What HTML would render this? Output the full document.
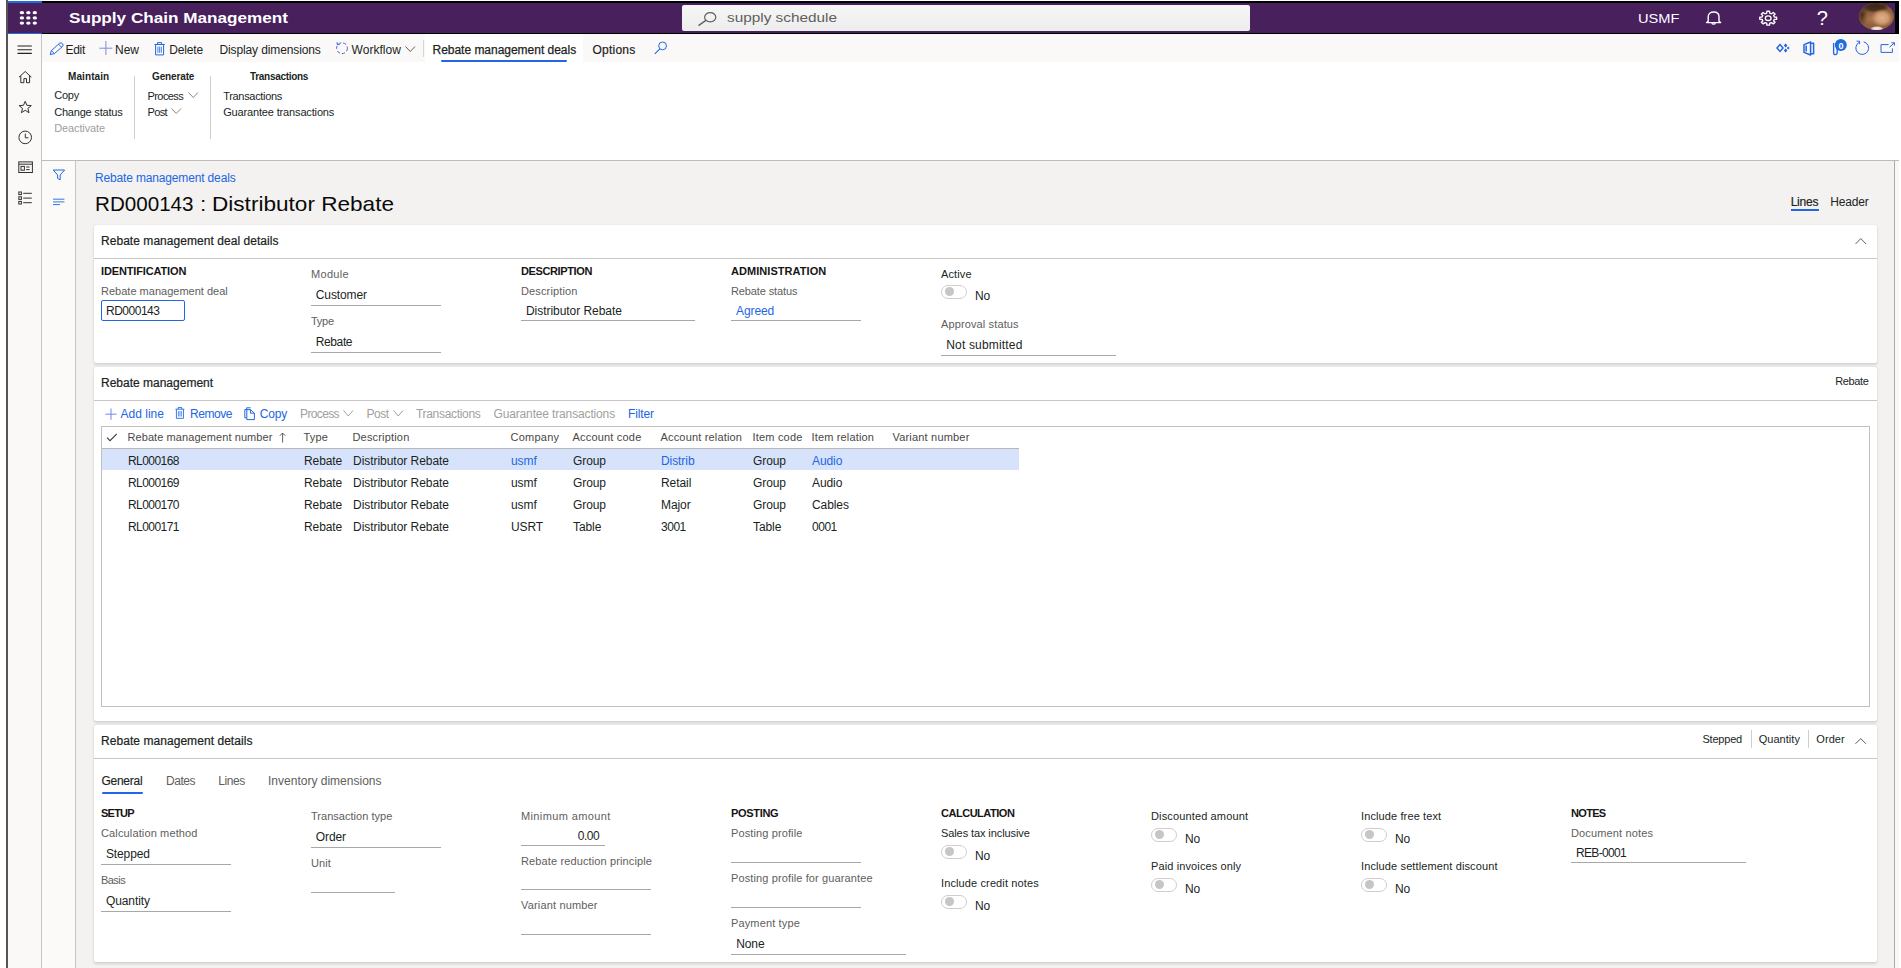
<!DOCTYPE html>
<html lang="en"><head><meta charset="utf-8"><title>Rebate management deals</title>
<style>
html,body{margin:0;padding:0;}
body{width:1901px;height:968px;overflow:hidden;background:#fff;position:relative;font-family:"Liberation Sans", sans-serif;}
#root{position:absolute;left:0;top:0;width:1901px;height:968px;overflow:hidden;}
#root div,#root span,#root svg{position:absolute;box-sizing:border-box;}
#root span{white-space:pre;}
svg{overflow:visible}
</style></head><body><div id="root">
<div style="left:6px;top:0px;width:2px;height:968px;background:#555555;"></div>
<div style="left:8px;top:1px;width:1891px;height:33px;background:#000;"></div>
<div style="left:8px;top:1px;width:34px;height:33px;background:#1f6ce0;"></div>
<div style="left:8px;top:3px;width:1887px;height:30px;background:#47205c;"></div>
<div style="left:8px;top:34px;width:33px;height:934px;background:#faf9f8;"></div>
<div style="left:41px;top:34px;width:1px;height:934px;background:#c8c6c4;"></div>
<div style="left:42px;top:34px;width:1857px;height:28px;background:#faf9f8;"></div>
<div style="left:42px;top:62px;width:1857px;height:98px;background:#fff;"></div>
<div style="left:42px;top:160px;width:1857px;height:1px;background:#bebbb8;"></div>
<div style="left:42px;top:161px;width:33px;height:807px;background:#fbfaf9;"></div>
<div style="left:75px;top:161px;width:1px;height:807px;background:#c8c6c4;"></div>
<div style="left:76px;top:161px;width:1818px;height:807px;background:#f3f2f1;"></div>
<div style="left:1894px;top:161px;width:1px;height:807px;background:#adabaa;"></div>
<div style="left:1895px;top:161px;width:4px;height:807px;background:#f8f7f6;"></div>
<svg style="left:0;top:0" width="60" height="34"><ellipse cx="21.90" cy="12.70" rx="2.2" ry="1.6" fill="#fff"/><ellipse cx="28.35" cy="12.70" rx="2.2" ry="1.6" fill="#fff"/><ellipse cx="34.80" cy="12.70" rx="2.2" ry="1.6" fill="#fff"/><ellipse cx="21.90" cy="17.90" rx="2.2" ry="1.6" fill="#fff"/><ellipse cx="28.35" cy="17.90" rx="2.2" ry="1.6" fill="#fff"/><ellipse cx="34.80" cy="17.90" rx="2.2" ry="1.6" fill="#fff"/><ellipse cx="21.90" cy="23.10" rx="2.2" ry="1.6" fill="#fff"/><ellipse cx="28.35" cy="23.10" rx="2.2" ry="1.6" fill="#fff"/><ellipse cx="34.80" cy="23.10" rx="2.2" ry="1.6" fill="#fff"/></svg>
<div style="left:682px;top:5px;width:568px;height:25.5px;background:linear-gradient(#f6f6f6,#ededed);border-radius:2px;"></div>
<svg style="left:697px;top:11px" width="22" height="16" viewBox="0 0 22 16"><ellipse cx="13.2" cy="6.2" rx="5.6" ry="4.6" fill="none" stroke="#605e5c" stroke-width="1.2"/><path d="M8.8 9.4 L1.5 14.6" stroke="#605e5c" stroke-width="1.3" fill="none"/></svg>
<svg style="left:1704px;top:10px" width="20" height="16" viewBox="0 0 20 16"><path d="M4.2 11.2 V6.8 C4.2 3.6 6.6 2 9.6 2 C12.6 2 15 3.6 15 6.8 V11.2 L16.6 12.6 H2.6 Z" fill="none" stroke="#fff" stroke-width="1.4" stroke-linejoin="round"/><path d="M7.8 13.2 C8.2 14.4 11 14.4 11.4 13.2" fill="none" stroke="#fff" stroke-width="1.3"/></svg>
<svg style="left:1758px;top:9.5px" width="20" height="16" viewBox="0 0 20 16"><path d="M16.37 6.99 L18.63 7.10 L18.63 9.30 L16.37 9.41 L15.61 10.92 L17.11 12.31 L15.22 13.86 L13.51 12.63 L11.68 13.26 L11.54 15.11 L8.86 15.11 L8.72 13.26 L6.89 12.63 L5.18 13.86 L3.29 12.31 L4.79 10.92 L4.03 9.41 L1.77 9.30 L1.77 7.10 L4.03 6.99 L4.79 5.48 L3.29 4.09 L5.18 2.54 L6.89 3.77 L8.72 3.14 L8.86 1.29 L11.54 1.29 L11.68 3.14 L13.51 3.77 L15.22 2.54 L17.11 4.09 L15.61 5.48 Z" fill="none" stroke="#fff" stroke-width="1.35" stroke-linejoin="round"/><ellipse cx="10.2" cy="8.2" rx="2.9" ry="2.3" fill="none" stroke="#fff" stroke-width="1.3"/></svg>
<div style="left:1859px;top:3px;width:34.8px;height:27px;border-radius:50%;overflow:hidden;background:#7a5234"><div style="left:0;top:0;width:36px;height:27px;background:radial-gradient(ellipse 11px 9px at 23px 15px,#e0b08a 0%,#d19a72 55%,rgba(170,115,75,0) 100%),radial-gradient(ellipse 9px 7px at 12px 16px,#a9744d 0%,rgba(150,100,60,0) 100%),radial-gradient(ellipse 16px 7px at 16px 3px,#3b2616 0%,#4a301c 60%,rgba(80,50,30,0) 100%),radial-gradient(ellipse 6px 11px at 3px 12px,#4a2f1b 0%,rgba(80,50,30,0) 100%),radial-gradient(ellipse 7px 3px at 18px 26px,#f0e8de 0%,#e8dccd 60%,rgba(230,220,200,0) 100%),radial-gradient(ellipse 4px 2px at 17px 13px,#6b4228 0%,rgba(100,60,40,0) 100%),radial-gradient(ellipse 4px 2px at 27px 13px,#7a4c2e 0%,rgba(100,60,40,0) 100%),#8c5f3d"></div></div>
<svg style="left:17px;top:45px" width="16" height="10"><path d="M0.5 1 H14.8 M0.5 4.7 H14.8 M0.5 8.4 H14.8" stroke="#252423" stroke-width="1.15"/></svg>
<svg style="left:18px;top:70px" width="15" height="14" viewBox="0 0 15 14"><path d="M1 7.2 L7.2 1.5 L13.4 7.2 M2.8 5.9 V12.7 H5.9 V8.6 H8.5 V12.7 H11.6 V5.9" stroke="#323130" fill="none" stroke-width="1" stroke-linejoin="round"/></svg>
<svg style="left:18px;top:100px" width="15" height="14" viewBox="0 0 15 14"><path d="M7.2 1.3 L8.9 5.3 L13.3 5.6 L9.9 8.4 L11 12.7 L7.2 10.3 L3.4 12.7 L4.5 8.4 L1.1 5.6 L5.5 5.3 Z" stroke="#323130" fill="none" stroke-width="1" stroke-linejoin="round"/></svg>
<svg style="left:18px;top:129.5px" width="15" height="15" viewBox="0 0 15 15"><circle cx="7.2" cy="7.4" r="6.3" stroke="#323130" fill="none" stroke-width="1"/><path d="M7.3 3.6 V7.8 H10.4" stroke="#323130" fill="none" stroke-width="1"/></svg>
<svg style="left:17.5px;top:160.5px" width="16" height="13" viewBox="0 0 16 13"><rect x="0.8" y="0.9" width="13.6" height="10.6" stroke="#323130" fill="none" stroke-width="1"/><path d="M0.8 3.2 H14.4" stroke="#323130" fill="none" stroke-width="1"/><rect x="3" y="5.4" width="3.4" height="3.8" stroke="#323130" fill="none" stroke-width="1"/><path d="M8.2 6 H11.6 M8.2 8.6 H11.6" stroke="#323130" fill="none" stroke-width="1"/></svg>
<svg style="left:17.5px;top:190.5px" width="16" height="14" viewBox="0 0 16 14"><rect x="0.8" y="1" width="2.6" height="2.6" stroke="#323130" fill="none" stroke-width="1"/><rect x="0.8" y="5.8" width="2.6" height="2.6" stroke="#323130" fill="none" stroke-width="1"/><rect x="0.8" y="10.4" width="2.6" height="2.6" stroke="#323130" fill="none" stroke-width="1"/><path d="M5.2 2.3 H13.8 M5.2 7.1 H13.8 M5.2 11.7 H13.8" stroke="#323130" fill="none" stroke-width="1"/></svg>
<svg style="left:52px;top:169px" width="14" height="12" viewBox="0 0 14 12"><path d="M1.2 1 H12.6 L8.2 6 V10.8 L5.6 9.4 V6 Z" stroke="#2266e3" fill="none" stroke-width="1" stroke-linejoin="round"/></svg>
<svg style="left:52px;top:197px" width="14" height="10" viewBox="0 0 14 10"><path d="M1 2.2 H12.4 M1 4.9 H12.4 M1 7.6 H8" stroke="#2266e3" stroke-width="0.9"/></svg>
<svg style="left:49px;top:41.5px" width="16" height="14" viewBox="0 0 16 14"><path d="M1.2 12.6 L2.4 8.6 L10.6 1.2 Q12.4 0.4 13.6 1.8 Q14.6 3 13.6 4.4 L5.4 11.6 Z M2.4 8.6 L5.4 11.6 M9.6 2.2 L12.6 5.2" stroke="#2266e3" fill="none" stroke-width="1" stroke-linejoin="round"/></svg>
<svg style="left:99px;top:41px" width="14" height="15"><path d="M6.9 0 V14 M0.3 7.2 H13.4" stroke="#7b8be6" stroke-width="1"/></svg>
<svg style="left:154px;top:41.5px" width="12.0" height="14.0" viewBox="0 0 12 14"><path d="M0.6 2.5 H10.6 M3.6 2.5 V0.6 H7.6 V2.5 M1.6 2.5 V12.9 H9.6 V2.5" stroke="#2266e3" fill="none" stroke-width="1"/><path d="M3.9 4.6 V10.8 M5.6 4.6 V10.8 M7.3 4.6 V10.8" stroke="#2266e3" fill="none" stroke-width="0.8"/></svg>
<svg style="left:335px;top:41px" width="14" height="14" viewBox="0 0 14 14"><circle cx="7" cy="7.2" r="5.4" fill="none" stroke="#4a5fd0" stroke-width="1" stroke-dasharray="3.2 2"/><path d="M2.2 1.2 V3.6 H4.6" stroke="#2266e3" stroke-width="1" fill="none"/></svg>
<svg style="left:405.2px;top:46.3px" width="10.5" height="6.5"><path d="M0.5 0.5 L5.25 5.5 L10.0 0.5" stroke="#605e5c" fill="none" stroke-width="1"/></svg>
<div style="left:423px;top:39.5px;width:1px;height:17px;background:#d8d6d4;"></div>
<div style="left:425px;top:34px;width:158px;height:28px;background:#fff;"></div>
<div style="left:441px;top:60px;width:126px;height:2px;background:#2266e3;border-radius:1px;"></div>
<svg style="left:654px;top:41px" width="14" height="14" viewBox="0 0 14 14"><circle cx="8.6" cy="4.9" r="3.9" fill="none" stroke="#2266e3" stroke-width="1"/><path d="M5.8 7.8 L0.8 12.8" stroke="#2266e3" stroke-width="1.1"/></svg>
<svg style="left:1776px;top:43px" width="14" height="11" viewBox="0 0 14 11"><path d="M4 1.6 L7 5 L4 8.4 L1 5 Z" fill="none" stroke="#2266e3" stroke-width="1.5"/><path d="M9.6 0.6 L11.4 2.6 L9.6 4.6 L7.8 2.6 Z M9.6 5.6 L11.4 7.6 L9.6 9.6 L7.8 7.6 Z M12.2 3.4 L13.6 5 L12.2 6.6 L10.8 5 Z" fill="#2266e3"/></svg>
<svg style="left:1803px;top:40.5px" width="12" height="15" viewBox="0 0 12 15"><path d="M1 3.6 L7.6 1 V14 L1 11.4 Z M3.2 4.4 V10.6 M7.6 2.2 H10.6 V12.8 H7.6" fill="none" stroke="#2266e3" stroke-width="1.5" stroke-linejoin="round"/></svg>
<svg style="left:1832px;top:38px" width="16" height="18" viewBox="0 0 16 18"><path d="M1.6 5 V14.4 Q1.6 16.6 3.4 16.6 Q5.2 16.6 5.2 14.4 V7" fill="none" stroke="#2266e3" stroke-width="1.3"/><circle cx="8.8" cy="7" r="6" fill="#1f6ce0"/></svg>
<svg style="left:1854px;top:40px" width="16" height="16" viewBox="0 0 16 16"><path d="M5.2 2.4 A6.4 6.4 0 1 0 9.6 1.8" fill="none" stroke="#2266e3" stroke-width="1"/><path d="M2.6 1.2 H5.6 V4.2" fill="none" stroke="#2266e3" stroke-width="1"/></svg>
<svg style="left:1880px;top:42px" width="16" height="12" viewBox="0 0 16 12"><path d="M8.6 2.6 H1 V10.4 H12.4 V6.4 M9.6 5.2 L14.4 0.8 M11.4 0.8 H14.4 V3.6" fill="none" stroke="#2266e3" stroke-width="1"/></svg>
<div style="left:134px;top:76px;width:1px;height:63px;background:#d0cecc;"></div>
<svg style="left:187.5px;top:91.6px" width="10.5" height="6.5"><path d="M0.5 0.5 L5.25 5.5 L10.0 0.5" stroke="#8a8886" fill="none" stroke-width="1"/></svg>
<svg style="left:171.2px;top:107.8px" width="10.5" height="6.5"><path d="M0.5 0.5 L5.25 5.5 L10.0 0.5" stroke="#8a8886" fill="none" stroke-width="1"/></svg>
<div style="left:210px;top:76px;width:1px;height:63px;background:#d0cecc;"></div>
<div style="left:1790.5px;top:209px;width:28px;height:2px;background:#2266e3;"></div>
<div style="left:94px;top:225px;width:1783px;height:138px;background:#fff;border-radius:2px;box-shadow:0 1.5px 3px rgba(0,0,0,.13),0 0 1px rgba(0,0,0,.10);"></div>
<svg style="left:1855.2px;top:238.2px" width="11.6" height="7"><path d="M0.5 6 L5.8 0.6 L11.1 6" stroke="#605e5c" fill="none" stroke-width="1"/></svg>
<div style="left:94px;top:258px;width:1783px;height:1px;background:#c8c6c4;"></div>
<div style="left:101px;top:300px;width:84px;height:21px;border:1px solid #2266e3;border-radius:2px;background:#fff"></div>
<div style="left:311px;top:305px;width:129.5px;height:1px;background:#aaa8a6;"></div>
<div style="left:311px;top:352px;width:129.5px;height:1px;background:#aaa8a6;"></div>
<div style="left:521px;top:320px;width:174px;height:1px;background:#aaa8a6;"></div>
<div style="left:731px;top:320px;width:129.5px;height:1px;background:#aaa8a6;"></div>
<div style="left:941px;top:285.3px;width:26px;height:13.5px;border-radius:7px;border:1px solid #d0cecc;background:#fff"></div>
<div style="left:944.9px;top:287.40000000000003px;width:9.2px;height:8.6px;border-radius:50%;background:#c8c6c4"></div>
<div style="left:941px;top:355px;width:175px;height:1px;background:#aaa8a6;"></div>
<div style="left:94px;top:367px;width:1783px;height:353.5px;background:#fff;border-radius:2px;box-shadow:0 1.5px 3px rgba(0,0,0,.13),0 0 1px rgba(0,0,0,.10);"></div>
<div style="left:94px;top:400px;width:1783px;height:1px;background:#c8c6c4;"></div>
<svg style="left:104.5px;top:407.5px" width="13" height="13"><path d="M6 0.5 V11.8 M0.4 6.2 H11.6" stroke="#6f8ce8" stroke-width="1"/></svg>
<svg style="left:174.6px;top:407.3px" width="10.56" height="12.32" viewBox="0 0 12 14"><path d="M0.6 2.5 H10.6 M3.6 2.5 V0.6 H7.6 V2.5 M1.6 2.5 V12.9 H9.6 V2.5" stroke="#2266e3" fill="none" stroke-width="1"/><path d="M3.9 4.6 V10.8 M5.6 4.6 V10.8 M7.3 4.6 V10.8" stroke="#2266e3" fill="none" stroke-width="0.8"/></svg>
<svg style="left:244px;top:406.5px" width="12" height="14" viewBox="0 0 12 14"><path d="M2.6 2.6 V0.8 H6.6 M0.8 2.6 H6.4 L10.4 6.2 V12.6 H2.8 V2.6 M6.4 2.6 V6.2 H10.4 M0.8 2.6 V10.8 H2.6" stroke="#2266e3" fill="none" stroke-width="1"/></svg>
<svg style="left:343px;top:409.6px" width="10.5" height="7"><path d="M0.5 0.5 L5.25 6 L10.0 0.5" stroke="#a19f9d" fill="none" stroke-width="1"/></svg>
<svg style="left:392.5px;top:409.6px" width="10.5" height="7"><path d="M0.5 0.5 L5.25 6 L10.0 0.5" stroke="#a19f9d" fill="none" stroke-width="1"/></svg>
<div style="left:101px;top:426px;width:1769px;height:281px;border:1px solid #c3c1bf;background:#fff"></div>
<div style="left:102px;top:448px;width:917px;height:1px;background:#bab8b6;"></div>
<div style="left:102px;top:449px;width:917px;height:21px;background:#d7e3fb;"></div>
<svg style="left:106px;top:433px" width="12" height="9"><path d="M1 4.6 L4 7.6 L10.8 0.8" stroke="#3b3a39" stroke-width="1.1" fill="none"/></svg>
<svg style="left:279px;top:432px" width="8" height="11"><path d="M3.6 10.5 V1 M0.8 3.8 L3.6 1 L6.4 3.8" stroke="#605e5c" stroke-width="1" fill="none"/></svg>
<div style="left:94px;top:725px;width:1783px;height:237px;background:#fff;border-radius:2px;box-shadow:0 1.5px 3px rgba(0,0,0,.13),0 0 1px rgba(0,0,0,.10);"></div>
<div style="left:1751px;top:730px;width:1px;height:18px;background:#cfcdcb;"></div>
<div style="left:1808px;top:730px;width:1px;height:18px;background:#cfcdcb;"></div>
<svg style="left:1855.3px;top:738px" width="11.4" height="6.8"><path d="M0.5 5.8 L5.7 0.6 L10.9 5.8" stroke="#605e5c" fill="none" stroke-width="1"/></svg>
<div style="left:94px;top:758px;width:1783px;height:1px;background:#c8c6c4;"></div>
<div style="left:101.5px;top:791.5px;width:41px;height:2px;background:#2266e3;border-radius:1px;"></div>
<div style="left:101px;top:864px;width:129.5px;height:1px;background:#aaa8a6;"></div>
<div style="left:101px;top:911px;width:129.5px;height:1px;background:#aaa8a6;"></div>
<div style="left:311px;top:847px;width:129.5px;height:1px;background:#aaa8a6;"></div>
<div style="left:311px;top:892px;width:83.5px;height:1px;background:#aaa8a6;"></div>
<div style="left:521px;top:845px;width:83.5px;height:1px;background:#aaa8a6;"></div>
<div style="left:521px;top:889px;width:129.5px;height:1px;background:#aaa8a6;"></div>
<div style="left:521px;top:933.5px;width:129.5px;height:1px;background:#aaa8a6;"></div>
<div style="left:731px;top:862px;width:129.5px;height:1px;background:#aaa8a6;"></div>
<div style="left:731px;top:907px;width:129.5px;height:1px;background:#aaa8a6;"></div>
<div style="left:731px;top:954px;width:174.5px;height:1px;background:#aaa8a6;"></div>
<div style="left:941px;top:845.2px;width:26px;height:13.5px;border-radius:7px;border:1px solid #d0cecc;background:#fff"></div>
<div style="left:944.9px;top:847.3000000000001px;width:9.2px;height:8.6px;border-radius:50%;background:#c8c6c4"></div>
<div style="left:941px;top:895px;width:26px;height:13.5px;border-radius:7px;border:1px solid #d0cecc;background:#fff"></div>
<div style="left:944.9px;top:897.1px;width:9.2px;height:8.6px;border-radius:50%;background:#c8c6c4"></div>
<div style="left:1151px;top:828.2px;width:26px;height:13.5px;border-radius:7px;border:1px solid #d0cecc;background:#fff"></div>
<div style="left:1154.9px;top:830.3000000000001px;width:9.2px;height:8.6px;border-radius:50%;background:#c8c6c4"></div>
<div style="left:1151px;top:878px;width:26px;height:13.5px;border-radius:7px;border:1px solid #d0cecc;background:#fff"></div>
<div style="left:1154.9px;top:880.1px;width:9.2px;height:8.6px;border-radius:50%;background:#c8c6c4"></div>
<div style="left:1361px;top:828.2px;width:26px;height:13.5px;border-radius:7px;border:1px solid #d0cecc;background:#fff"></div>
<div style="left:1364.9px;top:830.3000000000001px;width:9.2px;height:8.6px;border-radius:50%;background:#c8c6c4"></div>
<div style="left:1361px;top:878px;width:26px;height:13.5px;border-radius:7px;border:1px solid #d0cecc;background:#fff"></div>
<div style="left:1364.9px;top:880.1px;width:9.2px;height:8.6px;border-radius:50%;background:#c8c6c4"></div>
<div style="left:1571px;top:862px;width:174.5px;height:1px;background:#aaa8a6;"></div>
<span style="top:9.00px;font-size:14px;line-height:18px;color:#fff;transform:scaleX(1.2240);transform-origin:left center;left:68.50px;font-weight:700;">Supply Chain Management</span>
<span style="top:10.00px;font-size:12px;line-height:16px;color:#605e5c;transform:scaleX(1.2781);transform-origin:left center;left:726.50px;">supply schedule</span>
<span style="top:11.00px;font-size:12px;line-height:16px;color:#fff;transform:scaleX(1.2206);transform-origin:left center;left:1638.00px;">USMF</span>
<span style="top:5.00px;font-size:20px;line-height:26px;color:#fff;left:1816.80px;">?</span>
<span style="top:42.00px;font-size:12px;line-height:16px;color:#201f1e;letter-spacing:-0.297px;left:65.50px;">Edit</span>
<span style="top:42.00px;font-size:12px;line-height:16px;color:#201f1e;letter-spacing:-0.005px;left:115.00px;">New</span>
<span style="top:42.00px;font-size:12px;line-height:16px;color:#201f1e;letter-spacing:-0.165px;left:169.30px;">Delete</span>
<span style="top:42.00px;font-size:12px;line-height:16px;color:#201f1e;letter-spacing:-0.122px;left:219.50px;">Display dimensions</span>
<span style="top:42.00px;font-size:12px;line-height:16px;color:#201f1e;letter-spacing:0.047px;left:351.50px;">Workflow</span>
<span style="top:42.00px;font-size:12px;line-height:16px;color:#201f1e;letter-spacing:-0.021px;left:432.50px;-webkit-text-stroke:0.25px #201f1e;">Rebate management deals</span>
<span style="top:42.00px;font-size:12px;line-height:16px;color:#201f1e;letter-spacing:0.234px;left:592.50px;-webkit-text-stroke:0.2px #201f1e;">Options</span>
<span style="top:38.00px;font-size:9px;line-height:16px;color:#fff;left:1838.40px;font-weight:700;">0</span>
<span style="top:68.50px;font-size:10px;line-height:16px;color:#201f1e;letter-spacing:0.092px;left:68.00px;font-weight:700;">Maintain</span>
<span style="top:87.00px;font-size:11px;line-height:16px;color:#201f1e;letter-spacing:-0.222px;left:54.20px;">Copy</span>
<span style="top:104.00px;font-size:11px;line-height:16px;color:#201f1e;letter-spacing:-0.203px;left:54.20px;">Change status</span>
<span style="top:120.00px;font-size:11px;line-height:16px;color:#a19f9d;letter-spacing:-0.118px;left:54.20px;">Deactivate</span>
<span style="top:68.50px;font-size:10px;line-height:16px;color:#201f1e;letter-spacing:-0.132px;left:152.00px;font-weight:700;">Generate</span>
<span style="top:88.00px;font-size:11px;line-height:16px;color:#201f1e;letter-spacing:-0.579px;left:147.50px;">Process</span>
<span style="top:104.00px;font-size:11px;line-height:16px;color:#201f1e;letter-spacing:-0.629px;left:147.50px;">Post</span>
<span style="top:68.50px;font-size:10px;line-height:16px;color:#201f1e;letter-spacing:-0.309px;left:250.00px;font-weight:700;">Transactions</span>
<span style="top:88.00px;font-size:11px;line-height:16px;color:#201f1e;letter-spacing:-0.314px;left:223.20px;">Transactions</span>
<span style="top:104.00px;font-size:11px;line-height:16px;color:#201f1e;letter-spacing:-0.153px;left:223.20px;">Guarantee transactions</span>
<span style="top:170.00px;font-size:12px;line-height:16px;color:#2266e3;letter-spacing:-0.156px;left:95.00px;">Rebate management deals</span>
<span style="top:190.00px;font-size:21px;line-height:27px;color:#0b0a0a;transform:scaleX(0.9810);transform-origin:left center;left:94.50px;">RD000143</span>
<span style="top:190.00px;font-size:21px;line-height:27px;color:#0b0a0a;left:200.30px;">:</span>
<span style="top:190.00px;font-size:21px;line-height:27px;color:#0b0a0a;transform:scaleX(1.0753);transform-origin:left center;left:211.80px;">Distributor Rebate</span>
<span style="top:194.00px;font-size:12px;line-height:16px;color:#201f1e;letter-spacing:-0.237px;left:1790.70px;-webkit-text-stroke:0.2px #201f1e;">Lines</span>
<span style="top:194.00px;font-size:12px;line-height:16px;color:#201f1e;letter-spacing:-0.193px;left:1830.30px;">Header</span>
<span style="top:233.00px;font-size:12px;line-height:16px;color:#201f1e;letter-spacing:0.046px;left:101.00px;-webkit-text-stroke:0.22px #201f1e;">Rebate management deal details</span>
<span style="top:263.00px;font-size:11px;line-height:16px;color:#161514;letter-spacing:-0.142px;left:101.00px;font-weight:700;">IDENTIFICATION</span>
<span style="top:283.00px;font-size:11px;line-height:16px;color:#605e5c;letter-spacing:0.009px;left:101.00px;">Rebate management deal</span>
<span style="top:303.00px;font-size:12px;line-height:16px;color:#201f1e;letter-spacing:-0.484px;left:106.00px;">RD000143</span>
<span style="top:266.00px;font-size:11px;line-height:16px;color:#605e5c;letter-spacing:0.304px;left:311.00px;">Module</span>
<span style="top:287.00px;font-size:12px;line-height:16px;color:#201f1e;letter-spacing:-0.127px;left:315.80px;">Customer</span>
<span style="top:313.00px;font-size:11px;line-height:16px;color:#605e5c;letter-spacing:-0.265px;left:311.00px;">Type</span>
<span style="top:334.00px;font-size:12px;line-height:16px;color:#201f1e;letter-spacing:-0.401px;left:315.80px;">Rebate</span>
<span style="top:263.00px;font-size:11px;line-height:16px;color:#161514;letter-spacing:-0.381px;left:521.00px;font-weight:700;">DESCRIPTION</span>
<span style="top:283.00px;font-size:11px;line-height:16px;color:#605e5c;letter-spacing:0.134px;left:521.00px;">Description</span>
<span style="top:303.00px;font-size:12px;line-height:16px;color:#201f1e;letter-spacing:-0.051px;left:526.00px;">Distributor Rebate</span>
<span style="top:263.00px;font-size:11px;line-height:16px;color:#161514;letter-spacing:0.056px;left:731.00px;font-weight:700;">ADMINISTRATION</span>
<span style="top:283.00px;font-size:11px;line-height:16px;color:#605e5c;letter-spacing:-0.121px;left:731.00px;">Rebate status</span>
<span style="top:303.00px;font-size:12px;line-height:16px;color:#2266e3;letter-spacing:-0.097px;left:736.00px;">Agreed</span>
<span style="top:266.00px;font-size:11px;line-height:16px;color:#201f1e;letter-spacing:0.125px;left:941.00px;">Active</span>
<span style="top:288.00px;font-size:12px;line-height:16px;color:#201f1e;letter-spacing:-0.115px;left:975.00px;">No</span>
<span style="top:316.00px;font-size:11px;line-height:16px;color:#605e5c;letter-spacing:0.126px;left:941.00px;">Approval status</span>
<span style="top:337.00px;font-size:12px;line-height:16px;color:#201f1e;letter-spacing:0.181px;left:946.20px;">Not submitted</span>
<span style="top:375.00px;font-size:12px;line-height:16px;color:#201f1e;left:101.00px;-webkit-text-stroke:0.22px #201f1e;">Rebate management</span>
<span style="top:373.00px;font-size:11px;line-height:16px;color:#201f1e;letter-spacing:-0.381px;left:1835.30px;">Rebate</span>
<span style="top:406.00px;font-size:12px;line-height:16px;color:#2266e3;letter-spacing:0.016px;left:120.50px;">Add line</span>
<span style="top:406.00px;font-size:12px;line-height:16px;color:#2266e3;letter-spacing:-0.448px;left:190.00px;">Remove</span>
<span style="top:406.00px;font-size:12px;line-height:16px;color:#2266e3;letter-spacing:-0.204px;left:259.80px;">Copy</span>
<span style="top:406.00px;font-size:12px;line-height:16px;color:#a19f9d;letter-spacing:-0.623px;left:300.00px;">Process</span>
<span style="top:406.00px;font-size:12px;line-height:16px;color:#a19f9d;letter-spacing:-0.454px;left:366.50px;">Post</span>
<span style="top:406.00px;font-size:12px;line-height:16px;color:#a19f9d;letter-spacing:-0.312px;left:416.00px;">Transactions</span>
<span style="top:406.00px;font-size:12px;line-height:16px;color:#a19f9d;letter-spacing:-0.148px;left:493.50px;">Guarantee transactions</span>
<span style="top:406.00px;font-size:12px;line-height:16px;color:#2266e3;letter-spacing:-0.112px;left:628.00px;">Filter</span>
<span style="top:429.00px;font-size:11px;line-height:16px;color:#4a4846;letter-spacing:0.079px;left:127.50px;">Rebate management number</span>
<span style="top:429.00px;font-size:11px;line-height:16px;color:#4a4846;letter-spacing:0.209px;left:303.50px;">Type</span>
<span style="top:429.00px;font-size:11px;line-height:16px;color:#4a4846;letter-spacing:0.175px;left:352.50px;">Description</span>
<span style="top:429.00px;font-size:11px;line-height:16px;color:#4a4846;letter-spacing:0.235px;left:510.50px;">Company</span>
<span style="top:429.00px;font-size:11px;line-height:16px;color:#4a4846;letter-spacing:0.194px;left:572.50px;">Account code</span>
<span style="top:429.00px;font-size:11px;line-height:16px;color:#4a4846;letter-spacing:0.173px;left:660.50px;">Account relation</span>
<span style="top:429.00px;font-size:11px;line-height:16px;color:#4a4846;letter-spacing:0.188px;left:752.50px;">Item code</span>
<span style="top:429.00px;font-size:11px;line-height:16px;color:#4a4846;letter-spacing:0.163px;left:811.50px;">Item relation</span>
<span style="top:429.00px;font-size:11px;line-height:16px;color:#4a4846;letter-spacing:0.186px;left:892.50px;">Variant number</span>
<span style="top:453.00px;font-size:12px;line-height:16px;color:#201f1e;letter-spacing:-0.549px;left:128.00px;">RL000168</span>
<span style="top:453.00px;font-size:12px;line-height:16px;color:#201f1e;letter-spacing:-0.097px;left:304.00px;">Rebate</span>
<span style="top:453.00px;font-size:12px;line-height:16px;color:#201f1e;letter-spacing:-0.040px;left:353.00px;">Distributor Rebate</span>
<span style="top:453.00px;font-size:12px;line-height:16px;color:#2266e3;letter-spacing:-0.098px;left:511.00px;">usmf</span>
<span style="top:453.00px;font-size:12px;line-height:16px;color:#201f1e;letter-spacing:-0.100px;left:573.00px;">Group</span>
<span style="top:453.00px;font-size:12px;line-height:16px;color:#2266e3;letter-spacing:-0.073px;left:661.00px;">Distrib</span>
<span style="top:453.00px;font-size:12px;line-height:16px;color:#201f1e;letter-spacing:-0.100px;left:753.00px;">Group</span>
<span style="top:453.00px;font-size:12px;line-height:16px;color:#2266e3;letter-spacing:-0.092px;left:812.00px;">Audio</span>
<span style="top:475.00px;font-size:12px;line-height:16px;color:#201f1e;letter-spacing:-0.549px;left:128.00px;">RL000169</span>
<span style="top:475.00px;font-size:12px;line-height:16px;color:#201f1e;letter-spacing:-0.097px;left:304.00px;">Rebate</span>
<span style="top:475.00px;font-size:12px;line-height:16px;color:#201f1e;letter-spacing:-0.040px;left:353.00px;">Distributor Rebate</span>
<span style="top:475.00px;font-size:12px;line-height:16px;color:#201f1e;letter-spacing:-0.098px;left:511.00px;">usmf</span>
<span style="top:475.00px;font-size:12px;line-height:16px;color:#201f1e;letter-spacing:-0.100px;left:573.00px;">Group</span>
<span style="top:475.00px;font-size:12px;line-height:16px;color:#201f1e;letter-spacing:-0.077px;left:661.00px;">Retail</span>
<span style="top:475.00px;font-size:12px;line-height:16px;color:#201f1e;letter-spacing:-0.100px;left:753.00px;">Group</span>
<span style="top:475.00px;font-size:12px;line-height:16px;color:#201f1e;letter-spacing:-0.092px;left:812.00px;">Audio</span>
<span style="top:497.00px;font-size:12px;line-height:16px;color:#201f1e;letter-spacing:-0.549px;left:128.00px;">RL000170</span>
<span style="top:497.00px;font-size:12px;line-height:16px;color:#201f1e;letter-spacing:-0.097px;left:304.00px;">Rebate</span>
<span style="top:497.00px;font-size:12px;line-height:16px;color:#201f1e;letter-spacing:-0.040px;left:353.00px;">Distributor Rebate</span>
<span style="top:497.00px;font-size:12px;line-height:16px;color:#201f1e;letter-spacing:-0.098px;left:511.00px;">usmf</span>
<span style="top:497.00px;font-size:12px;line-height:16px;color:#201f1e;letter-spacing:-0.100px;left:573.00px;">Group</span>
<span style="top:497.00px;font-size:12px;line-height:16px;color:#201f1e;letter-spacing:-0.090px;left:661.00px;">Major</span>
<span style="top:497.00px;font-size:12px;line-height:16px;color:#201f1e;letter-spacing:-0.100px;left:753.00px;">Group</span>
<span style="top:497.00px;font-size:12px;line-height:16px;color:#201f1e;letter-spacing:-0.093px;left:812.00px;">Cables</span>
<span style="top:519.00px;font-size:12px;line-height:16px;color:#201f1e;letter-spacing:-0.549px;left:128.00px;">RL000171</span>
<span style="top:519.00px;font-size:12px;line-height:16px;color:#201f1e;letter-spacing:-0.097px;left:304.00px;">Rebate</span>
<span style="top:519.00px;font-size:12px;line-height:16px;color:#201f1e;letter-spacing:-0.040px;left:353.00px;">Distributor Rebate</span>
<span style="top:519.00px;font-size:12px;line-height:16px;color:#201f1e;letter-spacing:-0.122px;left:511.00px;">USRT</span>
<span style="top:519.00px;font-size:12px;line-height:16px;color:#201f1e;letter-spacing:-0.086px;left:573.00px;">Table</span>
<span style="top:519.00px;font-size:12px;line-height:16px;color:#201f1e;letter-spacing:-0.467px;left:661.00px;">3001</span>
<span style="top:519.00px;font-size:12px;line-height:16px;color:#201f1e;letter-spacing:-0.086px;left:753.00px;">Table</span>
<span style="top:519.00px;font-size:12px;line-height:16px;color:#201f1e;letter-spacing:-0.467px;left:812.00px;">0001</span>
<span style="top:733.00px;font-size:12px;line-height:16px;color:#201f1e;letter-spacing:0.056px;left:101.00px;-webkit-text-stroke:0.22px #201f1e;">Rebate management details</span>
<span style="top:731.00px;font-size:11px;line-height:16px;color:#201f1e;letter-spacing:-0.212px;left:1702.50px;">Stepped</span>
<span style="top:731.00px;font-size:11px;line-height:16px;color:#201f1e;letter-spacing:0.041px;left:1758.70px;">Quantity</span>
<span style="top:731.00px;font-size:11px;line-height:16px;color:#201f1e;letter-spacing:0.055px;left:1816.30px;">Order</span>
<span style="top:773.00px;font-size:12px;line-height:16px;color:#201f1e;letter-spacing:-0.272px;left:101.50px;-webkit-text-stroke:0.15px #201f1e;">General</span>
<span style="top:773.00px;font-size:12px;line-height:16px;color:#605e5c;letter-spacing:-0.412px;left:165.90px;">Dates</span>
<span style="top:773.00px;font-size:12px;line-height:16px;color:#605e5c;letter-spacing:-0.438px;left:218.30px;">Lines</span>
<span style="top:773.00px;font-size:12px;line-height:16px;color:#605e5c;letter-spacing:0.005px;left:268.00px;">Inventory dimensions</span>
<span style="top:805.00px;font-size:11px;line-height:16px;color:#161514;letter-spacing:-0.758px;left:101.00px;font-weight:700;">SETUP</span>
<span style="top:825.00px;font-size:11px;line-height:16px;color:#605e5c;letter-spacing:0.135px;left:101.00px;">Calculation method</span>
<span style="top:846.00px;font-size:12px;line-height:16px;color:#201f1e;letter-spacing:-0.096px;left:105.90px;">Stepped</span>
<span style="top:872.00px;font-size:11px;line-height:16px;color:#605e5c;letter-spacing:-0.541px;left:101.00px;">Basis</span>
<span style="top:893.00px;font-size:12px;line-height:16px;color:#201f1e;letter-spacing:-0.084px;left:105.90px;">Quantity</span>
<span style="top:808.00px;font-size:11px;line-height:16px;color:#605e5c;letter-spacing:0.030px;left:311.00px;">Transaction type</span>
<span style="top:829.00px;font-size:12px;line-height:16px;color:#201f1e;letter-spacing:-0.092px;left:315.80px;">Order</span>
<span style="top:855.00px;font-size:11px;line-height:16px;color:#605e5c;letter-spacing:0.122px;left:311.00px;">Unit</span>
<span style="top:808.00px;font-size:11px;line-height:16px;color:#605e5c;letter-spacing:0.374px;left:521.00px;">Minimum amount</span>
<span style="top:828.00px;font-size:12px;line-height:16px;color:#201f1e;letter-spacing:-0.465px;left:577.80px;">0.00</span>
<span style="top:853.00px;font-size:11px;line-height:16px;color:#605e5c;letter-spacing:0.123px;left:521.00px;">Rebate reduction principle</span>
<span style="top:897.00px;font-size:11px;line-height:16px;color:#605e5c;letter-spacing:0.165px;left:521.00px;">Variant number</span>
<span style="top:805.00px;font-size:11px;line-height:16px;color:#161514;letter-spacing:-0.317px;left:731.00px;font-weight:700;">POSTING</span>
<span style="top:825.00px;font-size:11px;line-height:16px;color:#605e5c;letter-spacing:0.116px;left:731.00px;">Posting profile</span>
<span style="top:870.00px;font-size:11px;line-height:16px;color:#605e5c;letter-spacing:0.119px;left:731.00px;">Posting profile for guarantee</span>
<span style="top:915.00px;font-size:11px;line-height:16px;color:#605e5c;letter-spacing:0.140px;left:731.00px;">Payment type</span>
<span style="top:936.00px;font-size:12px;line-height:16px;color:#201f1e;letter-spacing:-0.108px;left:736.20px;">None</span>
<span style="top:805.00px;font-size:11px;line-height:16px;color:#161514;letter-spacing:-0.475px;left:941.00px;font-weight:700;">CALCULATION</span>
<span style="top:825.00px;font-size:11px;line-height:16px;color:#201f1e;letter-spacing:-0.095px;left:941.00px;">Sales tax inclusive</span>
<span style="top:848.00px;font-size:12px;line-height:16px;color:#201f1e;letter-spacing:-0.115px;left:975.00px;">No</span>
<span style="top:875.00px;font-size:11px;line-height:16px;color:#201f1e;letter-spacing:0.119px;left:941.00px;">Include credit notes</span>
<span style="top:898.00px;font-size:12px;line-height:16px;color:#201f1e;letter-spacing:-0.115px;left:975.00px;">No</span>
<span style="top:808.00px;font-size:11px;line-height:16px;color:#201f1e;letter-spacing:0.139px;left:1151.00px;">Discounted amount</span>
<span style="top:831.00px;font-size:12px;line-height:16px;color:#201f1e;letter-spacing:-0.115px;left:1185.00px;">No</span>
<span style="top:858.00px;font-size:11px;line-height:16px;color:#201f1e;letter-spacing:0.122px;left:1151.00px;">Paid invoices only</span>
<span style="top:881.00px;font-size:12px;line-height:16px;color:#201f1e;letter-spacing:-0.115px;left:1185.00px;">No</span>
<span style="top:808.00px;font-size:11px;line-height:16px;color:#201f1e;letter-spacing:0.115px;left:1361.00px;">Include free text</span>
<span style="top:831.00px;font-size:12px;line-height:16px;color:#201f1e;letter-spacing:-0.115px;left:1395.00px;">No</span>
<span style="top:858.00px;font-size:11px;line-height:16px;color:#201f1e;letter-spacing:0.123px;left:1361.00px;">Include settlement discount</span>
<span style="top:881.00px;font-size:12px;line-height:16px;color:#201f1e;letter-spacing:-0.115px;left:1395.00px;">No</span>
<span style="top:805.00px;font-size:11px;line-height:16px;color:#161514;letter-spacing:-0.681px;left:1571.00px;font-weight:700;">NOTES</span>
<span style="top:825.00px;font-size:11px;line-height:16px;color:#605e5c;letter-spacing:0.143px;left:1571.00px;">Document notes</span>
<span style="top:845.00px;font-size:12px;line-height:16px;color:#201f1e;letter-spacing:-0.672px;left:1576.00px;">REB-0001</span>
</div></body></html>
